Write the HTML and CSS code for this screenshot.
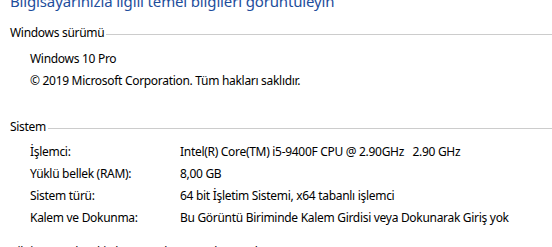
FILE: index.html
```html
<!DOCTYPE html>
<html lang="tr">
<head>
<meta charset="utf-8">
<link rel="stylesheet" href="styles.css">
</head>
<body>
<div class="page">
  <h1 class="title">Bilgisayarınızla ilgili temel bilgileri görüntüleyin</h1>

  <section class="group">
    <div class="group-head"><span class="group-label">Windows sürümü</span><span class="rule"></span></div>
    <div class="group-body first">
      <div class="line">Windows 10 Pro</div>
      <div class="line">© 2019 Microsoft Corporation. Tüm hakları saklıdır.</div>
    </div>
  </section>

  <section class="group system">
    <div class="group-head"><span class="group-label">Sistem</span><span class="rule"></span></div>
    <div class="group-body grid">
      <div class="key">İşlemci:</div><div class="val">Intel(R) Core(TM) i5-9400F CPU @ 2.90GHz&nbsp;&nbsp;&nbsp;2.90 GHz</div>
      <div class="key">Yüklü bellek (RAM):</div><div class="val">8,00 GB</div>
      <div class="key">Sistem türü:</div><div class="val">64 bit İşletim Sistemi, x64 tabanlı işlemci</div>
      <div class="key">Kalem ve Dokunma:</div><div class="val">Bu Görüntü Biriminde Kalem Girdisi veya Dokunarak Giriş yok</div>
    </div>
  </section>

  <div class="next-head">Bilgisayar adı, etki alanı ve çalışma grubu ayarları</div>
</div>
</body>
</html>
```
FILE: styles.css
```css
html, body {
  margin: 0;
  padding: 0;
  background: #ffffff;
  overflow: hidden;
}
body {
  width: 552px;
  height: 247px;
  font-family: "Noto Sans", "Open Sans", sans-serif;
  font-size: 12px;
  letter-spacing: -0.3px;
  color: #000000;
}
.page {
  padding-left: 10px;
}
.title {
  margin: -9px 0 11px 0;
  font-size: 15px;
  line-height: 20px;
  font-weight: normal;
  letter-spacing: -0.15px;
  color: #1e4e9c;
  white-space: nowrap;
}
.group-head {
  display: flex;
  align-items: center;
  height: 22px;
  line-height: 22px;
}
.group-label {
  padding-right: 2px;
}
.rule {
  flex: 1;
  height: 0;
  border-top: 1px solid #cccccc;
  margin-top: 2px;
}
.group-body {
  padding-left: 20px;
}
.group-body.first {
  margin-top: 4px;
}
.line {
  line-height: 22px;
  height: 22px;
  white-space: nowrap;
}
.system {
  margin-top: 24px;
}
.grid {
  display: grid;
  grid-template-columns: 150px auto;
  grid-auto-rows: 22px;
  line-height: 22px;
  margin-top: 3px;
  white-space: nowrap;
}
.next-head {
  margin-top: 12px;
  line-height: 22px;
  white-space: nowrap;
}
```
